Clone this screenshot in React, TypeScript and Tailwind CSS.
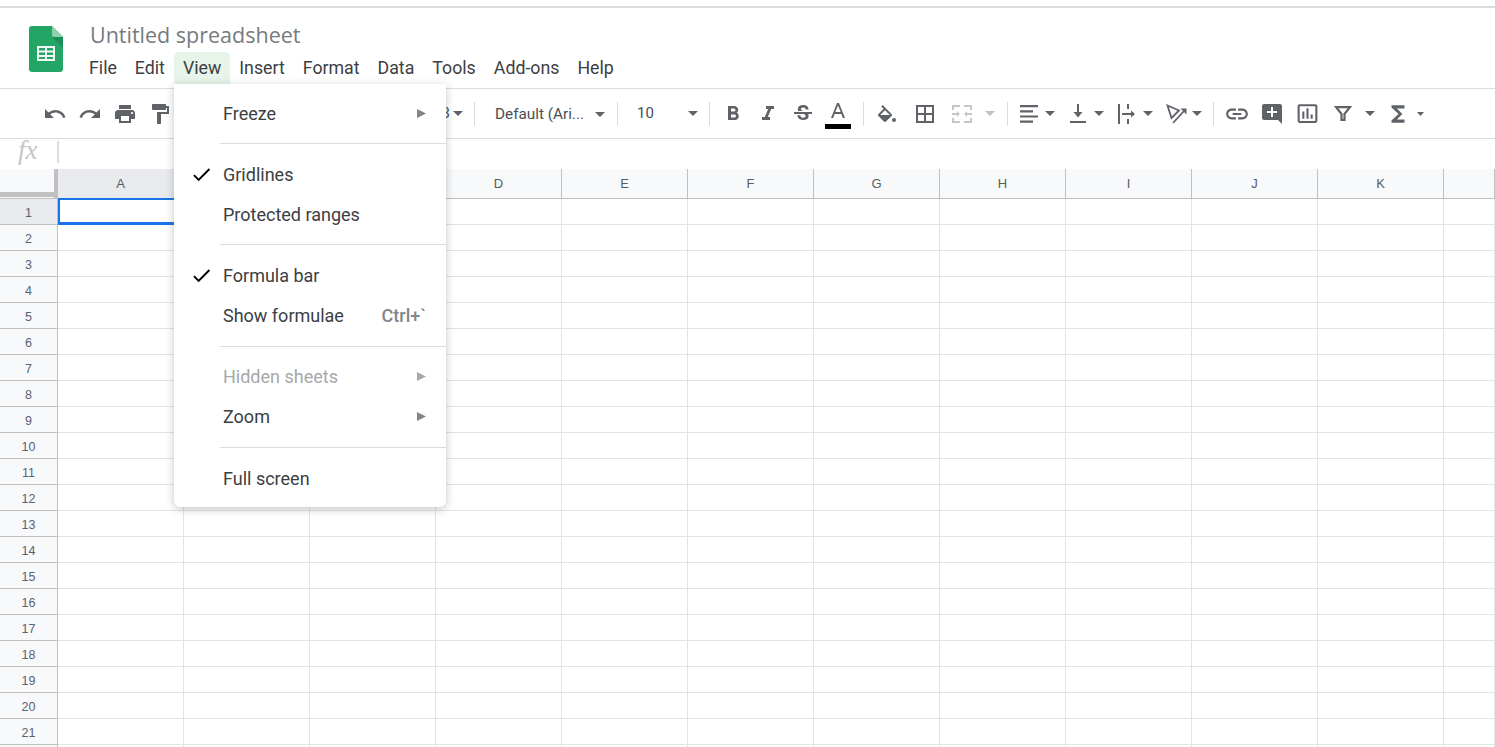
import { ReactNode } from "react";
import {
  MdUndo,
  MdRedo,
  MdPrint,
  MdFormatPaint,
  MdFormatBold,
  MdFormatItalic,
  MdStrikethroughS,
  MdBorderAll,
  MdLink,
  MdAddComment,
  MdInsertChartOutlined,
  MdFunctions,
  MdCheck,
} from "react-icons/md";

const COLUMNS = ["A", "B", "C", "D", "E", "F", "G", "H", "I", "J", "K", ""];
const ROWS = Array.from({ length: 22 }, (_, i) => i + 1);
const MENUS = ["File", "Edit", "View", "Insert", "Format", "Data", "Tools", "Add-ons", "Help"];

function Caret({ disabled }: { disabled?: boolean }) {
  return (
    <svg width="10" height="5" viewBox="0 0 10 5">
      <path d="M0 0h10L5 5z" fill={disabled ? "#bdc1c6" : "#5f6368"} />
    </svg>
  );
}

function Cell({ className, children }: { className: string; children?: ReactNode }) {
  return <div className={`flex h-full shrink-0 items-center justify-center ${className}`}>{children}</div>;
}

function Sep() {
  return <div className="h-[24px] w-px shrink-0 bg-[#dadce0]" />;
}

function FillIcon() {
  return (
    <svg width="20" height="18" viewBox="2 0 20 18" fill="#5f6368">
      <path d="M16.56 8.94L7.62 0 6.21 1.41l2.38 2.38-5.15 5.15c-.59.59-.59 1.54 0 2.12l5.5 5.5c.29.29.68.44 1.06.44s.77-.15 1.06-.44l5.5-5.5c.59-.58.59-1.53 0-2.12zM5.21 10L10 5.21 14.79 10H5.21z" />
      <circle cx="19" cy="15" r="2" />
    </svg>
  );
}

function MergeIcon() {
  return (
    <svg width="20" height="18" viewBox="0 0 20 18" fill="#c4c7ca">
      <path d="M0 0h8v2H2v3H0zM12 0h8v5h-2V2h-6zM0 13h2v3h6v2H0zM18 13h2v5h-8v-2h6zM0 8h5V6l3 3-3 3v-2H0zM20 10h-5v2l-3-3 3-3v2h5z" />
    </svg>
  );
}

function AlignIcon() {
  return (
    <svg width="18" height="18" viewBox="0 0 18 18" fill="#5f6368">
      <path d="M0 0h18v2.200H0zM0 5.200h13v2.200H0zM0 10.400h18v2.200H0zM0 15.600h13v2.200H0z" />
    </svg>
  );
}

function ValignIcon() {
  return (
    <svg width="16" height="19" viewBox="0 0 16 19" fill="#5f6368">
      <path d="M7 0h2v8h3.500L8 13.500 3.500 8H7zM0 17h16v2H0z" />
    </svg>
  );
}

function WrapIcon() {
  return (
    <svg width="18" height="20" viewBox="0 0 18 20" fill="#5f6368">
      <path d="M0 0h2v20H0zM9 0h2v5H9zM9 15h2v5H9zM4 9h9V6.500l4 3.500-4 3.500V11H4z" />
    </svg>
  );
}

function RotateIcon() {
  return (
    <svg width="21" height="20" viewBox="0 0 21 20" fill="none" stroke="#5f6368" strokeWidth="1.800">
      <path d="M1.500 1.500L13 6.500 5.500 14z" />
      <path d="M7 19L18 7" />
      <path d="M14.500 4.500h6v6z" fill="#5f6368" stroke="none" />
    </svg>
  );
}

function FilterIcon() {
  return (
    <svg width="18" height="15" viewBox="0 0 18 15" fill="none" stroke="#5f6368" strokeWidth="2.200">
      <path d="M2 1.100h14L10.500 8v6h-3V8z" />
    </svg>
  );
}

function TextColorIcon() {
  return (
    <div className="flex flex-col items-center pt-[4px]">
      <svg width="18" height="18" viewBox="0 0 18 18" fill="#5f6368">
        <path d="M8 1h2l6 15h-2.200l-1.400-4H5.600l-1.400 4H2zM6.300 10h5.400L9 3.500z" />
      </svg>
      <div className="mt-[4px] h-[5px] w-[26px] bg-black" />
    </div>
  );
}

function Toolbar() {
  const icon = "text-[#5f6368]";
  return (
    <div className="flex h-[50px] items-center border-b border-[#dadce0] pl-[38px]">
      <Cell className="w-[34px]"><MdUndo size={24} className={icon} /></Cell>
      <Cell className="w-[35px]"><MdRedo size={24} className={icon} /></Cell>
      <Cell className="w-[35px]"><MdPrint size={24} className={icon} /></Cell>
      <Cell className="w-[35px]"><MdFormatPaint size={24} className={icon} /></Cell>
      <div className="flex h-full w-[295px] shrink-0 items-center justify-end gap-[3px] pr-[9px] text-[15px] text-[#4a4d51]">
        123
        <Caret />
      </div>
      <Cell className="w-[4px]"><Sep /></Cell>
      <div className="flex h-full w-[141px] shrink-0 items-center pt-[1px] pl-[19px] text-[15.300px] text-[#4a4d51]">
        Default (Ari...
        <span className="ml-[11px]"><Caret /></span>
      </div>
      <Sep />
      <div className="flex h-full w-[91px] shrink-0 items-center pl-[19px] text-[15px] text-[#4a4d51]">
        10
        <span className="ml-[34px]"><Caret /></span>
      </div>
      <Sep />
      <Cell className="w-[46px]"><MdFormatBold size={24} className={icon} /></Cell>
      <Cell className="w-[24px]"><MdFormatItalic size={24} className={icon} /></Cell>
      <Cell className="w-[45px]"><MdStrikethroughS size={24} className={icon} /></Cell>
      <Cell className="w-[26px]"><TextColorIcon /></Cell>
      <div className="w-[12px] shrink-0" />
      <Sep />
      <Cell className="w-[46px]"><FillIcon /></Cell>
      <Cell className="w-[30px]"><MdBorderAll size={24} className={icon} /></Cell>
      <Cell className="w-[44px]"><MergeIcon /></Cell>
      <Cell className="w-[12px]"><Caret disabled /></Cell>
      <div className="w-[11px] shrink-0" />
      <Sep />
      <Cell className="w-[35px] pl-[7px]"><AlignIcon /></Cell>
      <Cell className="w-[14px]"><Caret /></Cell>
      <Cell className="w-[35px] pl-[7px]"><ValignIcon /></Cell>
      <Cell className="w-[14px]"><Caret /></Cell>
      <Cell className="w-[35px] pl-[7px]"><WrapIcon /></Cell>
      <Cell className="w-[14px]"><Caret /></Cell>
      <Cell className="w-[35px] pl-[7px]"><RotateIcon /></Cell>
      <Cell className="w-[14px]"><Caret /></Cell>
      <div className="w-[9px] shrink-0" />
      <Sep />
      <Cell className="w-[45px]"><MdLink size={26} className={icon} /></Cell>
      <Cell className="w-[26px]"><MdAddComment size={24} className={icon} /></Cell>
      <Cell className="w-[44px]"><MdInsertChartOutlined size={25} className={icon} /></Cell>
      <Cell className="w-[28px]"><FilterIcon /></Cell>
      <Cell className="w-[26px]"><Caret /></Cell>
      <Cell className="w-[30px]"><MdFunctions size={26} className={icon} /></Cell>
      <Cell className="w-[14px]">
        <svg width="7" height="4" viewBox="0 0 7 4"><path d="M0 0h7L3.500 4z" fill="#5f6368" /></svg>
      </Cell>
    </div>
  );
}

function SheetGrid() {
  return (
    <div className="relative grid grid-cols-[58px_repeat(11,126px)_1fr] font-['Liberation_Sans',sans-serif] text-[13px] text-[#595c60]">
      {/* corner with the freeze handles */}
      <div className="h-[30px] border-b border-[#c0c0c0] bg-[#f8f9fa]">
        <div className="flex h-full">
          <div className="flex-1">
            <div className="mt-[23px] h-[5px] bg-[#c0c0c0]" />
          </div>
          <div className="w-[4px] bg-[#c0c0c0]" />
        </div>
      </div>
      {COLUMNS.map((c, i) => (
        <div
          key={i}
          className={`flex h-[30px] items-center justify-center border-r border-b border-[#c0c0c0] ${
            c === "A" ? "bg-[#e8eaed]" : "bg-[#f8f9fa]"
          }`}
        >
          {c}
        </div>
      ))}
      {ROWS.map((r) => (
        <div key={r} className="contents">
          <div
            className={`flex h-[26px] items-center justify-center border-r border-b border-[#c0c0c0] pt-[3px] text-[12.500px] text-[#5a6272] ${
              r === 1 ? "bg-[#e8eaed]" : "bg-[#f8f9fa]"
            }`}
          >
            {r < 22 ? r : ""}
          </div>
          {COLUMNS.map((_, i) => (
            <div key={i} className="h-[26px] border-r border-b border-[#e2e3e3] bg-white" />
          ))}
        </div>
      ))}
      {/* selected cell A1 */}
      <div className="absolute top-[29px] left-[58px] h-[27px] w-[126px] border-2 border-b-[3px] border-[#1a73e8]" />
    </div>
  );
}

function MenuItem({
  label,
  checked,
  arrow,
  shortcut,
  disabled,
}: {
  label: string;
  checked?: boolean;
  arrow?: boolean;
  shortcut?: string;
  disabled?: boolean;
}) {
  return (
    <div className={`flex h-[40px] items-center pt-[1px] pr-[20px] ${disabled ? "text-[#a5a8ac]" : "text-[#3c4043]"}`}>
      <div className="flex w-[49px] shrink-0 justify-end pr-[10px]">
        {checked && <MdCheck size={23} className="text-black" />}
      </div>
      <span className="flex-1">{label}</span>
      {shortcut && <span className="font-medium text-[#80868b]">{shortcut}</span>}
      {arrow && (
        <svg width="9" height="9" viewBox="0 0 9 9">
          <path d="M0 0l9 4.500L0 9z" fill={disabled ? "#a5a8ac" : "#80868b"} />
        </svg>
      )}
    </div>
  );
}

function Divider({ className = "h-[21px]" }: { className?: string }) {
  return (
    <div className={`flex items-center pl-[46px] ${className}`}>
      <div className="h-px flex-1 bg-[#dadce0]" />
    </div>
  );
}

function ViewMenu() {
  return (
    <div className="absolute top-[84px] left-[174px] z-10 w-[272px] rounded-b-[6px] bg-white py-[9px] font-['Roboto',sans-serif] text-[18px] shadow-[0_2px_8px_rgba(60,64,67,0.3)]">
      <MenuItem label="Freeze" arrow />
      <Divider />
      <MenuItem label="Gridlines" checked />
      <MenuItem label="Protected ranges" />
      <Divider />
      <MenuItem label="Formula bar" checked />
      <MenuItem label="Show formulae" shortcut="Ctrl+`" />
      <Divider className="h-[21px] pt-[2px]" />
      <MenuItem label="Hidden sheets" arrow disabled />
      <MenuItem label="Zoom" arrow />
      <Divider className="h-[22px] pt-[1px]" />
      <MenuItem label="Full screen" />
    </div>
  );
}

function SheetsLogo() {
  return (
    <svg width="34" height="46" viewBox="0 0 34 46">
      <path d="M3 0h20l11 11v32a3 3 0 0 1-3 3H3a3 3 0 0 1-3-3V3a3 3 0 0 1 3-3z" fill="#23a566" />
      <path d="M23 11l11 11V11z" fill="#1c8f58" />
      <path d="M23 0l11 11H25a2 2 0 0 1-2-2z" fill="#8ed1b1" />
      <path
        d="M8 20h18v15H8zM10 22v2.500h6V22zM18 22v2.500h6V22zM10 26.500V29h6v-2.500zM18 26.500V29h6v-2.500zM10 31v2h6v-2zM18 31v2h6v-2z"
        fill="#f1f8f4"
        fillRule="evenodd"
      />
    </svg>
  );
}

export default function App() {
  return (
    <div className="relative h-[747px] overflow-hidden bg-white font-['Roboto',sans-serif]">
      <div className="mt-[6px] h-[2px] bg-[#dadce0]" />
      <div className="flex h-[81px] border-b border-[#dadce0]">
        <div className="w-[80px] shrink-0 pt-[18px] pl-[29px]">
          <SheetsLogo />
        </div>
        <div>
          <div className="mt-[12px] h-[32px] pl-[10px] font-['Open_Sans',sans-serif] text-[21.500px] leading-[29px] text-[#777b80]">
            Untitled spreadsheet
          </div>
          <div className="flex h-[36px] text-[17.750px] text-[#3c4043]">
            {MENUS.map((m) => (
              <div
                key={m}
                className={`flex h-[32px] items-center rounded-t-[5px] px-[9px] pt-[1px] ${m === "View" ? "bg-[#e6f4ea]" : ""}`}
              >
                {m}
              </div>
            ))}
          </div>
        </div>
      </div>
      <Toolbar />
      <div className="flex h-[30px] items-center">
        <div className="-mt-[8px] w-[57px] pl-[18px] font-['Liberation_Serif',serif] text-[27px] leading-none text-[#c4c7c5] italic">
          fx
        </div>
        <div className="-mt-[4px] h-[22px] w-[2px] bg-[#dadce0]" />
      </div>
      <SheetGrid />
      <ViewMenu />
    </div>
  );
}
